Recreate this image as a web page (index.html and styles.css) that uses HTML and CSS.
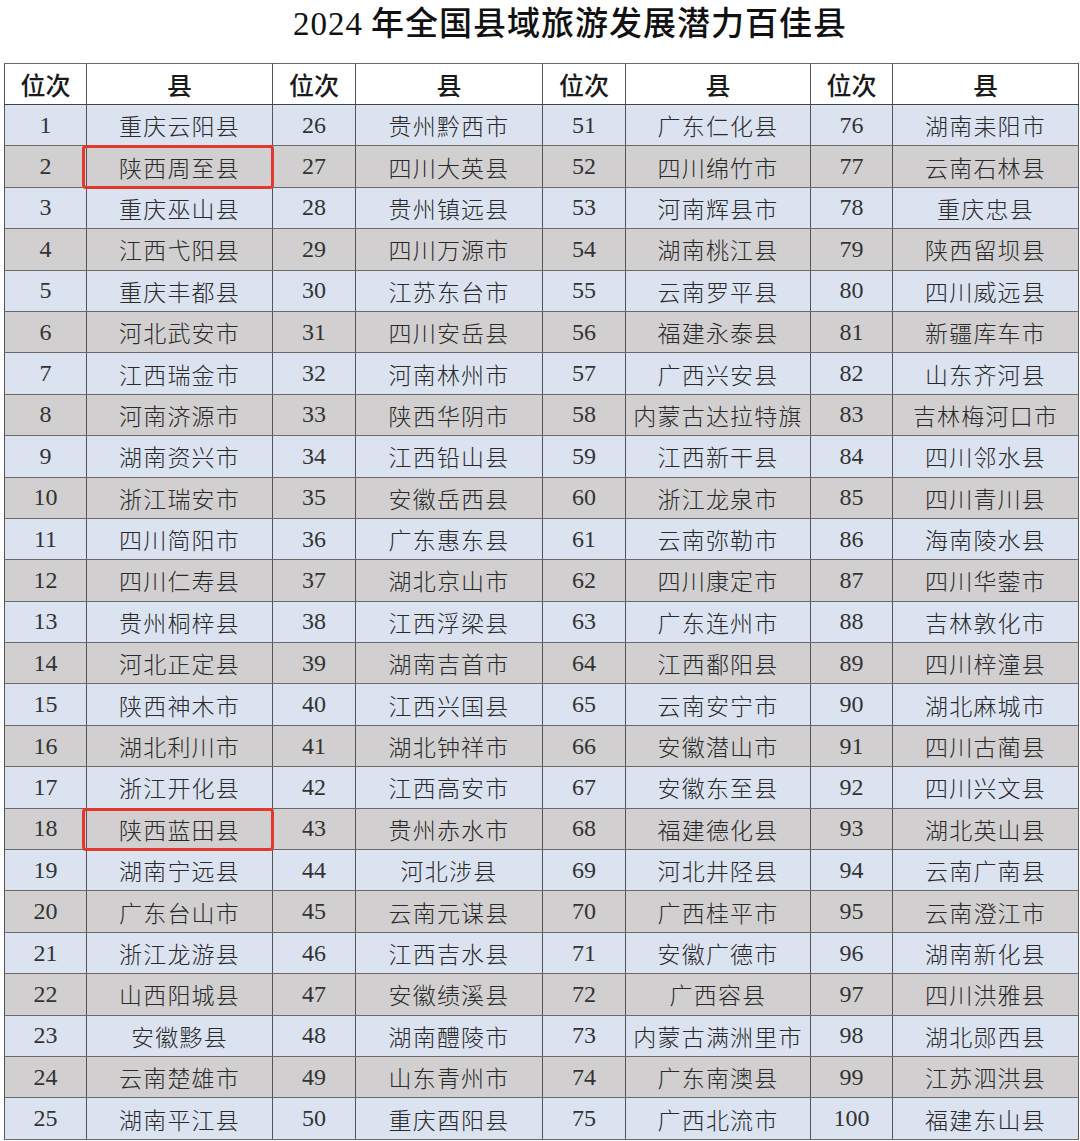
FILE: index.html
```html
<!DOCTYPE html>
<html lang="zh-CN">
<head>
<meta charset="utf-8">
<title>2024年全国县域旅游发展潜力百佳县</title>
<link rel="stylesheet" href="styles.css">
</head>
<body>
<h1 class="title"><span class="yr">2024</span>年全国县域旅游发展潜力百佳县</h1>
<table class="rank">
<colgroup>
<col class="c-n1"><col class="c-x1"><col class="c-n2"><col class="c-x2"><col class="c-n3"><col class="c-x3"><col class="c-n4"><col class="c-x4">
</colgroup>
<thead>
<tr><th>位次</th><th>县</th><th>位次</th><th>县</th><th>位次</th><th>县</th><th>位次</th><th>县</th></tr>
</thead>
<tbody id="rows">
<tr class="b"><td class="n">1</td><td>重庆云阳县</td><td class="n">26</td><td>贵州黔西市</td><td class="n">51</td><td>广东仁化县</td><td class="n">76</td><td>湖南耒阳市</td></tr>
<tr class="g"><td class="n">2</td><td class="hl">陕西周至县</td><td class="n">27</td><td>四川大英县</td><td class="n">52</td><td>四川绵竹市</td><td class="n">77</td><td>云南石林县</td></tr>
<tr class="b"><td class="n">3</td><td>重庆巫山县</td><td class="n">28</td><td>贵州镇远县</td><td class="n">53</td><td>河南辉县市</td><td class="n">78</td><td>重庆忠县</td></tr>
<tr class="g"><td class="n">4</td><td>江西弋阳县</td><td class="n">29</td><td>四川万源市</td><td class="n">54</td><td>湖南桃江县</td><td class="n">79</td><td>陕西留坝县</td></tr>
<tr class="b"><td class="n">5</td><td>重庆丰都县</td><td class="n">30</td><td>江苏东台市</td><td class="n">55</td><td>云南罗平县</td><td class="n">80</td><td>四川威远县</td></tr>
<tr class="g"><td class="n">6</td><td>河北武安市</td><td class="n">31</td><td>四川安岳县</td><td class="n">56</td><td>福建永泰县</td><td class="n">81</td><td>新疆库车市</td></tr>
<tr class="b"><td class="n">7</td><td>江西瑞金市</td><td class="n">32</td><td>河南林州市</td><td class="n">57</td><td>广西兴安县</td><td class="n">82</td><td>山东齐河县</td></tr>
<tr class="g"><td class="n">8</td><td>河南济源市</td><td class="n">33</td><td>陕西华阴市</td><td class="n">58</td><td>内蒙古达拉特旗</td><td class="n">83</td><td>吉林梅河口市</td></tr>
<tr class="b"><td class="n">9</td><td>湖南资兴市</td><td class="n">34</td><td>江西铅山县</td><td class="n">59</td><td>江西新干县</td><td class="n">84</td><td>四川邻水县</td></tr>
<tr class="g"><td class="n">10</td><td>浙江瑞安市</td><td class="n">35</td><td>安徽岳西县</td><td class="n">60</td><td>浙江龙泉市</td><td class="n">85</td><td>四川青川县</td></tr>
<tr class="b"><td class="n">11</td><td>四川简阳市</td><td class="n">36</td><td>广东惠东县</td><td class="n">61</td><td>云南弥勒市</td><td class="n">86</td><td>海南陵水县</td></tr>
<tr class="g"><td class="n">12</td><td>四川仁寿县</td><td class="n">37</td><td>湖北京山市</td><td class="n">62</td><td>四川康定市</td><td class="n">87</td><td>四川华蓥市</td></tr>
<tr class="b"><td class="n">13</td><td>贵州桐梓县</td><td class="n">38</td><td>江西浮梁县</td><td class="n">63</td><td>广东连州市</td><td class="n">88</td><td>吉林敦化市</td></tr>
<tr class="g"><td class="n">14</td><td>河北正定县</td><td class="n">39</td><td>湖南吉首市</td><td class="n">64</td><td>江西鄱阳县</td><td class="n">89</td><td>四川梓潼县</td></tr>
<tr class="b"><td class="n">15</td><td>陕西神木市</td><td class="n">40</td><td>江西兴国县</td><td class="n">65</td><td>云南安宁市</td><td class="n">90</td><td>湖北麻城市</td></tr>
<tr class="g"><td class="n">16</td><td>湖北利川市</td><td class="n">41</td><td>湖北钟祥市</td><td class="n">66</td><td>安徽潜山市</td><td class="n">91</td><td>四川古蔺县</td></tr>
<tr class="b"><td class="n">17</td><td>浙江开化县</td><td class="n">42</td><td>江西高安市</td><td class="n">67</td><td>安徽东至县</td><td class="n">92</td><td>四川兴文县</td></tr>
<tr class="g"><td class="n">18</td><td class="hl">陕西蓝田县</td><td class="n">43</td><td>贵州赤水市</td><td class="n">68</td><td>福建德化县</td><td class="n">93</td><td>湖北英山县</td></tr>
<tr class="b"><td class="n">19</td><td>湖南宁远县</td><td class="n">44</td><td>河北涉县</td><td class="n">69</td><td>河北井陉县</td><td class="n">94</td><td>云南广南县</td></tr>
<tr class="g"><td class="n">20</td><td>广东台山市</td><td class="n">45</td><td>云南元谋县</td><td class="n">70</td><td>广西桂平市</td><td class="n">95</td><td>云南澄江市</td></tr>
<tr class="b"><td class="n">21</td><td>浙江龙游县</td><td class="n">46</td><td>江西吉水县</td><td class="n">71</td><td>安徽广德市</td><td class="n">96</td><td>湖南新化县</td></tr>
<tr class="g"><td class="n">22</td><td>山西阳城县</td><td class="n">47</td><td>安徽绩溪县</td><td class="n">72</td><td>广西容县</td><td class="n">97</td><td>四川洪雅县</td></tr>
<tr class="b"><td class="n">23</td><td>安徽黟县</td><td class="n">48</td><td>湖南醴陵市</td><td class="n">73</td><td>内蒙古满洲里市</td><td class="n">98</td><td>湖北郧西县</td></tr>
<tr class="g"><td class="n">24</td><td>云南楚雄市</td><td class="n">49</td><td>山东青州市</td><td class="n">74</td><td>广东南澳县</td><td class="n">99</td><td>江苏泗洪县</td></tr>
<tr class="b"><td class="n">25</td><td>湖南平江县</td><td class="n">50</td><td>重庆酉阳县</td><td class="n">75</td><td>广西北流市</td><td class="n">100</td><td>福建东山县</td></tr>
</tbody>
</table>
</body>
</html>
```
FILE: styles.css
```css
html, body {
  margin: 0;
  padding: 0;
  background: #ffffff;
}
body {
  width: 1080px;
  height: 1141px;
  overflow: hidden;
  font-family: "Liberation Serif", "Noto Sans CJK SC", serif;
  color: #222;
}
.title {
  margin: 0;
  height: 63px;
  line-height: 48px;
  box-sizing: border-box;
  padding-left: 60px;
  text-align: center;
  font-size: 33px;
  font-weight: 500;
  color: #111;
  font-family: "Liberation Serif", "Noto Sans CJK SC", serif;
  letter-spacing: 1px;
}
.title .yr {
  font-weight: 400;
  margin-right: 8px;
}
.rank {
  margin-left: 4px;
  border-collapse: collapse;
  table-layout: fixed;
  width: 1074px;
  border: 1.5px solid #555;
}
.c-n1 { width: 82px; }
.c-x1 { width: 186px; }
.c-n2 { width: 83px; }
.c-x2 { width: 187px; }
.c-n3 { width: 83px; }
.c-x3 { width: 185px; }
.c-n4 { width: 82px; }
.c-x4 { width: 186px; }
.rank th, .rank td {
  border-left: 1.5px solid #555;
  border-right: 1.5px solid #555;
  border-top: 1px solid #6a6a6a;
  border-bottom: 1px solid #6a6a6a;
  padding: 0;
  text-align: center;
  vertical-align: middle;
  white-space: nowrap;
  overflow: visible;
}
.rank th {
  height: 40px;
  font-size: 25px;
  font-weight: 500;
  background: #ffffff;
  color: #1a1a1a;
  font-family: "Noto Sans CJK SC", sans-serif;
  border-bottom: 1.5px solid #444;
}
.rank td {
  height: 40.4px;
  font-size: 23px;
  font-family: "Noto Sans CJK SC", sans-serif;
  font-weight: 300;
  letter-spacing: 1.2px;
  color: #2a2a2a;
}
.rank td.n {
  font-family: "Liberation Serif", serif;
  font-size: 24px;
  font-weight: 400;
  letter-spacing: 0;
  color: #333;
}
.rank tr.b td { background: #dbe3f1; }
.rank tr.g td { background: #d1cfcf; }
.rank td.hl {
  position: relative;
}
.rank td.hl::after {
  content: "";
  position: absolute;
  left: -5px;
  right: -2px;
  top: -1px;
  bottom: -2px;
  border: 3px solid #e3392d;
  border-radius: 4px;
}
```
